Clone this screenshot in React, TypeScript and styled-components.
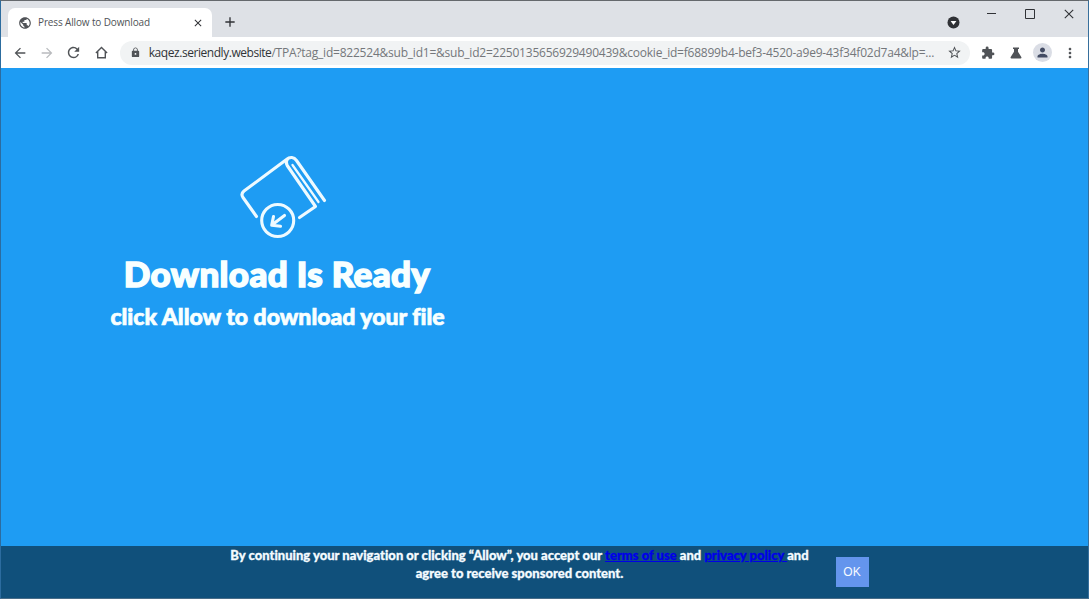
import React from "react";
import styled, { createGlobalStyle, css } from "styled-components";
import {
  MdPublic, MdClose, MdAdd, MdArrowBack, MdArrowForward, MdRefresh,
  MdLock, MdStarBorder, MdExtension, MdPerson, MdMoreVert,
} from "react-icons/md";

const GlobalStyle = createGlobalStyle`
  *, *::before, *::after { box-sizing: border-box; }
  body { margin: 0; overflow: hidden; background: #1e9cf3; }
`;

const Window = styled.div`
  width: 1089px;
  height: 599px;
  display: flex;
  flex-direction: column;
  border: 1px solid #65696d;
  border-left-color: #2c6c9f;
  border-right-color: #376f9c;
  border-bottom-color: #476c88;
  font-family: "Open Sans", "Noto Sans", sans-serif;
`;

const TabStrip = styled.header`
  height: 36px;
  flex: none;
  display: flex;
  justify-content: space-between;
  padding-left: 7px;
  background: #dee1e6;
`;

const TabGroup = styled.div`
  display: flex;
  align-items: flex-end;
`;

const Tab = styled.div`
  width: 204px;
  height: 29px;
  display: flex;
  align-items: center;
  padding: 0 8px 0 10px;
  border-radius: 7px 7px 0 0;
  background: #fff;
  color: #505357;
`;

const TabTitle = styled.span`
  flex: 1;
  margin-left: 6px;
  font-size: 10px;
  letter-spacing: -0.14px;
  line-height: 14px;
  white-space: nowrap;
  transform: translateY(-1px);
`;

const NewTab = styled.div`
  display: flex;
  margin: 0 0 7px 10px;
  color: #303236;
`;

const Caption = styled.div`
  display: flex;
  align-items: flex-start;
`;

const TabSearch = styled.div`
  display: flex;
  margin: 15px 12px 0 0;
`;

const CaptionButton = styled.div`
  width: 38.7px;
  height: 26px;
  display: flex;
  align-items: center;
  justify-content: center;
`;

const Toolbar = styled.div`
  height: 31px;
  flex: none;
  display: flex;
  align-items: center;
  padding: 0 10px;
  background: #fff;
  color: #505357;
`;

const ToolIcon = styled.span<{ $faded?: boolean }>`
  width: 27.2px;
  height: 20px;
  flex: none;
  display: flex;
  align-items: center;
  justify-content: center;
  color: ${(p) => (p.$faded ? "#b9bbbe" : "#505357")};
`;

const NavGroup = styled.div`
  display: flex;
  width: 109px;
  margin-left: -5px;
`;

const AddressBar = styled.div`
  width: 850px;
  height: 24px;
  flex: none;
  display: flex;
  align-items: center;
  margin-left: 5px;
  padding: 0 8px 0 10px;
  border-radius: 12px;
  background: #f1f3f4;

  svg { flex: none; }
`;

const Address = styled.span`
  flex: 1;
  min-width: 0;
  margin-left: 8px;
  color: #74777b;
  font-size: 12px;
  letter-spacing: -0.222px;
  line-height: 18px;
  white-space: nowrap;
`;

const Host = styled.span`
  color: #303338;
  letter-spacing: -0.45px;
`;

const Actions = styled.div`
  display: flex;
  margin-left: 5px;
`;

const Avatar = styled.span`
  width: 19px;
  height: 19px;
  display: flex;
  align-items: center;
  justify-content: center;
  border-radius: 50%;
  background: #dadde5;
  color: #424b63;
`;

const Page = styled.main`
  flex: 1;
  display: flex;
  flex-direction: column;
  justify-content: space-between;
  background: #1e9cf3;
`;

const roundedFace = css`
  font-family: Lato, "Open Sans", sans-serif;
  font-weight: 900;
  font-variant-ligatures: none;
  white-space: nowrap;
  -webkit-text-stroke-color: currentColor;
`;

const Message = styled.section`
  width: 553px;
  display: flex;
  flex-direction: column;
  align-items: center;
  padding-top: 85px;
  color: #f8ffff;
`;

const Book = styled.svg`
  width: 92px;
  height: 88px;
  margin-left: 10px;
  fill: none;
  stroke: #eefaff;
  stroke-width: 3.1;
  stroke-linecap: round;
  stroke-linejoin: round;
`;

const Title = styled.h1`
  ${roundedFace}
  margin: 10px 0 0 -1px;
  font-size: 35px;
  line-height: 44px;
  letter-spacing: 0.35px;
  -webkit-text-stroke-width: 1.5px;
`;

const Subtitle = styled.h2`
  ${roundedFace}
  margin: 5px 0 0;
  font-size: 23px;
  line-height: 32px;
  letter-spacing: 0;
  -webkit-text-stroke-width: 0.7px;
`;

const ConsentBar = styled.footer`
  height: 52px;
  display: flex;
  justify-content: center;
  padding-left: 9px;
  background: #10507b;
`;

const ConsentText = styled.p`
  ${roundedFace}
  width: 580px;
  margin: 0;
  color: #f4fbff;
  font-size: 13px;
  line-height: 18px;
  text-align: center;
  letter-spacing: 0.01px;
  -webkit-text-stroke-width: 0.3px;
`;

const PolicyLink = styled.a`
  color: #0000e8;
  text-decoration: underline;
`;

const OkButton = styled.button`
  width: 33px;
  height: 30px;
  margin: 11px 0 0 26px;
  padding: 0;
  border: 0;
  background: #6495ed;
  color: #f7fbff;
  font: 12px "Liberation Sans", sans-serif;
`;

export default function App() {
  return (
    <>
      <GlobalStyle />
      <Window>
        <TabStrip>
          <TabGroup>
            <Tab>
              <MdPublic size={14} />
              <TabTitle>Press Allow to Download</TabTitle>
              <MdClose size={12} color="#303236" />
            </Tab>
            <NewTab><MdAdd size={16} /></NewTab>
          </TabGroup>
          <Caption>
            <TabSearch>
              <svg width="13" height="13" viewBox="0 0 13 13">
                <circle cx="6.5" cy="6.5" r="6" fill="#303236" />
                <path d="M3.6 5h5.8L6.5 8.9z" fill="#fff" />
              </svg>
            </TabSearch>
            <CaptionButton>
              <svg width="10" height="10"><path d="M1 4.500h9" stroke="#303236" /></svg>
            </CaptionButton>
            <CaptionButton>
              <svg width="10" height="10"><path d="M.5.5h9v9h-9z" fill="none" stroke="#303236" /></svg>
            </CaptionButton>
            <CaptionButton>
              <svg width="10" height="10"><path d="M.8.8l8.4 8.4M9.2.8L.8 9.2" stroke="#303236" strokeWidth="1.1" /></svg>
            </CaptionButton>
          </Caption>
        </TabStrip>

        <Toolbar>
          <NavGroup>
            <ToolIcon><MdArrowBack size={16} /></ToolIcon>
            <ToolIcon $faded><MdArrowForward size={16} /></ToolIcon>
            <ToolIcon><MdRefresh size={17} /></ToolIcon>
            <ToolIcon>
              <svg width="13" height="13" viewBox="0 0 13 13" fill="none" stroke="currentColor" strokeWidth="1.4">
                <path d="M.9 7L6.500 1.500L12.100 7M2.700 5.800V11.700H10.300V5.800" />
              </svg>
            </ToolIcon>
          </NavGroup>
          <AddressBar>
            <MdLock size={11} />
            <Address>
              <Host>kaqez.seriendly.website</Host>
              /TPA?tag_id=822524&amp;sub_id1=&amp;sub_id2=2250135656929490439&amp;cookie_id=f68899b4-bef3-4520-a9e9-43f34f02d7a4&amp;lp=...
            </Address>
            <MdStarBorder size={15} />
          </AddressBar>
          <Actions>
            <ToolIcon><MdExtension size={14} /></ToolIcon>
            <ToolIcon>
              <svg width="12" height="12" viewBox="0 0 12 12" fill="currentColor">
                <path d="M3 .5h6v1.4H8v2.8l3.3 5.4c.4.7 0 1.4-.8 1.4h-9c-.8 0-1.2-.7-.8-1.4L4 4.700V1.900H3z" />
              </svg>
            </ToolIcon>
            <ToolIcon><Avatar><MdPerson size={15} /></Avatar></ToolIcon>
            <ToolIcon><MdMoreVert size={16} /></ToolIcon>
          </Actions>
        </Toolbar>

        <Page>
          <Message>
            <Book viewBox="237 153 92 88">
              <path d="M256.500 216.500L243 197.500Q240.500 194 244 191L286.500 159.500C290 156.500 294 157 296.500 160.500L324.500 200.500" />
              <path d="M299.500 217.500L315.500 206.500L287.200 165.500Q285.200 162 287.300 159.300" />
              <path d="M292.500 165L318.500 202" strokeWidth="2.3" />
              <circle cx="277.700" cy="220.500" r="16" />
              <path d="M284.500 215.500L272.500 224.500M273.500 216.500L271.700 225.300L280.500 226.300" />
            </Book>
            <Title>Download Is Ready</Title>
            <Subtitle>click Allow to download your file</Subtitle>
          </Message>
          <ConsentBar>
            <ConsentText>
              By continuing your navigation or clicking “Allow”, you accept our{" "}
              <PolicyLink>terms of use </PolicyLink>and <PolicyLink>privacy policy </PolicyLink>and
              <br />
              agree to receive sponsored content.
            </ConsentText>
            <OkButton>OK</OkButton>
          </ConsentBar>
        </Page>
      </Window>
    </>
  );
}
